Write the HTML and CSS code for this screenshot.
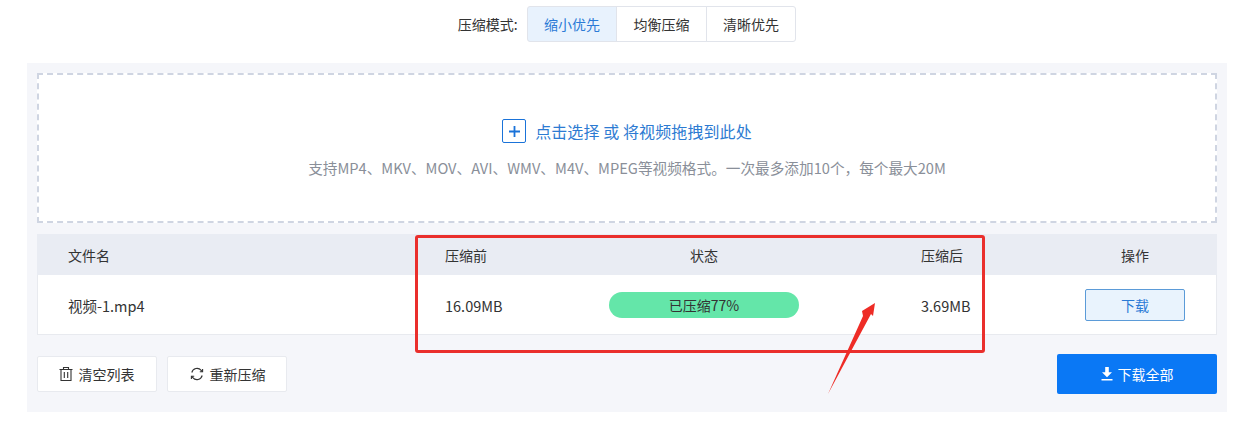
FILE: index.html
```html
<!DOCTYPE html>
<html lang="zh-CN">
<head>
<meta charset="utf-8">
<title>视频压缩</title>
<link rel="stylesheet" href="styles.css">
</head>
<body>
<div class="page">
  <div class="modes">
    <span class="modes-label">压缩模式:</span>
    <div class="mode-group">
      <button class="mode mode-active">缩小优先</button>
      <button class="mode">均衡压缩</button>
      <button class="mode">清晰优先</button>
    </div>
  </div>
  <main class="panel">
    <section class="drop">
      <div class="drop-title">
        <span class="plus"><svg width="13" height="13" viewBox="0 0 13 13"><path d="M6.5 1v11M1 6.5h11" stroke="#1a73d9" stroke-width="1.8" fill="none"/></svg></span>
        <span>点击选择 或 将视频拖拽到此处</span>
      </div>
      <p class="drop-note">支持MP4、MKV、MOV、AVI、WMV、M4V、MPEG等视频格式。一次最多添加10个，每个最大20M</p>
    </section>
    <section class="table">
      <div class="row head">
        <div class="cell-name">文件名</div>
        <div>压缩前</div>
        <div class="center">状态</div>
        <div></div>
        <div>压缩后</div>
        <div class="center">操作</div>
      </div>
      <div class="row body">
        <div class="cell-name">视频-1.mp4</div>
        <div>16.09MB</div>
        <div class="pill">已压缩77%</div>
        <div></div>
        <div>3.69MB</div>
        <div class="center"><button class="dl">下载</button></div>
      </div>
    </section>
    <section class="actions">
      <div class="actions-left">
        <button class="ghost">
          <svg class="icon-trash" width="16" height="16" viewBox="0 0 16 16" fill="none" stroke="#333" stroke-width="1.1"><path d="M1.5 3.5h13M5.5 3.5V1.5h5v2M3 3.5v11h10v-11M6.3 6v6M9.7 6v6"/></svg>
          清空列表
        </button>
        <button class="ghost">
          <svg width="16" height="16" viewBox="0 0 16 16" fill="none" stroke="#333" stroke-width="1.1"><path d="M2.8 6.5A5.4 5.4 0 0 1 12.2 4.4L13.4 5.8M13.2 9.5A5.4 5.4 0 0 1 3.8 11.6L2.6 10.2"/><path d="M13.6 3v2.8h-2.8M2.4 13v-2.8h2.8"/></svg>
          重新压缩
        </button>
      </div>
      <button class="primary">
        <svg width="12" height="14" viewBox="0 0 12 14"><path d="M4.2 0h3.6v5.2H11L6 10.2 1 5.2h3.2zM.5 12h11v1.6H.5z" fill="#fff"/></svg>
        下载全部
      </button>
    </section>
  </main>
  <div class="mark-box"></div>
  <svg class="mark-arrow" width="60" height="100" viewBox="0 0 60 100"><path d="M3 95 L38 17 L37 12 L50 4 L48 17 L46 15 Z" fill="#ee2c26"/></svg>
</div>
</body>
</html>
```
FILE: styles.css
```css
* { box-sizing: border-box; }
html, body { margin: 0; background: #fff; }
body {
  font-family: "Noto Sans CJK SC", "Noto Sans", sans-serif;
  font-size: 14px;
  color: #333;
}
button { font: inherit; cursor: pointer; }
.page { position: relative; width: 1245px; height: 444px; overflow: hidden; padding: 6px 0 0 27px; }

.modes { display: flex; align-items: center; justify-content: center; width: 1200px; height: 36px; gap: 9px; margin-bottom: 21px; }
.modes-label { font-size: 14px; }
.mode-group { display: flex; }
.mode {
  width: 90.5px; height: 36px; padding: 0;
  background: #fff; color: #333;
  border: 1px solid #e1e4eb; margin-left: -1px;
}
.mode:first-child { margin-left: 0; border-radius: 3px 0 0 3px; }
.mode:last-child { border-radius: 0 3px 3px 0; }
.mode-active { background: #e8f2fd; color: #2b7ad6; }

.panel { width: 1200px; height: 349px; background: #f5f6fa; padding: 10px 10px 0 10px; }
.drop {
  height: 150px; background: #fff;
  border: 2px dashed #cfd5e2;
  display: flex; flex-direction: column; align-items: center;
  padding-top: 44px;
}
.drop-title { display: flex; align-items: center; gap: 9px; font-size: 16px; letter-spacing: .1px; color: #2d7bd2; height: 24px; }
.plus { width: 24px; height: 24px; border: 1px solid #1a73d9; border-radius: 2px; display: flex; align-items: center; justify-content: center; }
.drop-note { margin: 15px 0 0; font-size: 14.65px; line-height: 20px; color: #8a8f99; }

.table { margin-top: 11px; }
.row { display: grid; grid-template-columns: 408px 164px 190px 122px 132px 164px; align-items: center; }
.head { height: 41px; background: #e9ecf3; font-size: 14px; }
.body { height: 60px; background: #fff; box-shadow: inset 0 -1px 0 #e8eaef, inset 1px 0 0 #e8eaef, inset -1px 0 0 #e8eaef; font-size: 14.5px; }
.cell-name { padding-left: 31px; }
.center { text-align: center; }
.pill { height: 26px; line-height: 26px; border-radius: 13px; background: #64e6a9; text-align: center; font-size: 14px; }
.dl { width: 100px; height: 32px; padding: 0; font-size: 14px; background: #e9f3fd; color: #2b7ad6; border: 1px solid #5b9bd8; border-radius: 2px; }

.actions { display: flex; justify-content: space-between; align-items: center; margin-top: 19px; }
.actions-left { display: flex; gap: 10px; }
.ghost {
  width: 120px; height: 36px; padding: 0;
  display: flex; align-items: center; justify-content: center; gap: 5px;
  background: #fff; color: #333; border: 1px solid #e8eaef; border-radius: 2px;
}
.icon-trash { margin-left: -2px; }
.primary {
  width: 160px; height: 40px; padding: 0;
  display: flex; align-items: center; justify-content: center; gap: 5px;
  background: #0a78f5; color: #fff; border: 0; border-radius: 2px;
}

.mark-box { position: absolute; left: 415px; top: 235px; width: 570px; height: 118px; border: 3px solid #ea2f2c; border-radius: 3px; }
.mark-arrow { position: absolute; left: 825px; top: 299px; }
```
